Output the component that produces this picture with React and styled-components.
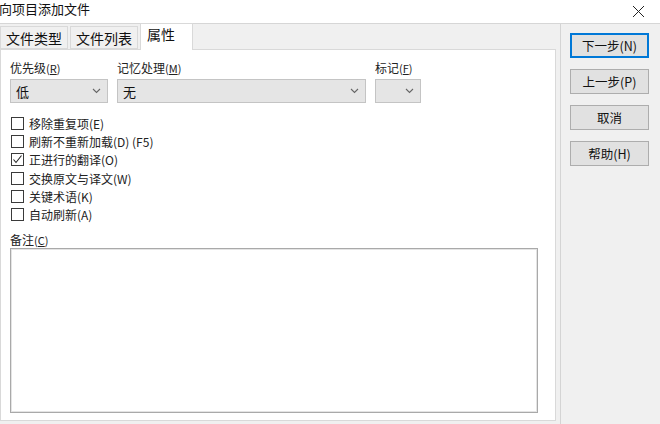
import React from "react";
import styled, { createGlobalStyle } from "styled-components";

const Global = createGlobalStyle`
  html, body { margin: 0; padding: 0; background: #f0f0f0; }
  body { font-family: "Noto Sans CJK SC", "Noto Sans", sans-serif; color: #1a1a1a; }
  * { box-sizing: border-box; }
`;

const Window = styled.div`
  width: 660px;
  height: 424px;
  background: #f0f0f0;
  display: flex;
  flex-direction: column;
  overflow: hidden;
`;

const TitleBar = styled.div`
  height: 24px;
  flex: none;
  background: #fff;
  display: flex;
  align-items: flex-start;
  justify-content: space-between;
  border-bottom: 1px solid #d6d6d6;
`;

const Title = styled.div`
  font-size: 13px;
  line-height: 18px;
  margin-left: -1px;
  color: #111;
`;

const CloseBtn = styled.div`
  width: 24px;
  height: 22px;
  margin-right: 10px;
  display: flex;
  align-items: center;
  justify-content: center;
`;

const Main = styled.div`
  flex: 1;
  display: flex;
`;

const LeftCol = styled.div`
  width: 556px;
  display: flex;
  flex-direction: column;
  padding-bottom: 3px;
`;

const TabStrip = styled.div`
  height: 25px;
  display: flex;
  align-items: flex-end;
  gap: 2px;
  position: relative;
  z-index: 1;
`;

const Tab = styled.div`
  height: ${p => (p.$active ? 27 : 23)}px;
  padding: ${p => (p.$active ? "0 17px 0 6px" : "0 5px")};
  margin-bottom: ${p => (p.$active ? -1 : 0)}px;
  background: ${p => (p.$active ? "#fff" : "#f0f0f0")};
  border: 1px solid #d9d9d9;
  border-bottom: ${p => (p.$active ? "none" : "1px solid #d9d9d9")};
  font-size: 14px;
  line-height: ${p => (p.$active ? 20 : 22)}px;
  display: flex;
  align-items: flex-start;
  color: #111;
`;

const Page = styled.div`
  flex: 1;
  background: #fff;
  border: 1px solid #d9d9d9;
  padding: 10px 0 0 9px;
  display: flex;
  flex-direction: column;
`;

const FieldRow = styled.div`
  display: flex;
  gap: 9px;
`;

const Field = styled.div`
  display: flex;
  flex-direction: column;
  gap: 3px;
  width: ${p => p.$w}px;
`;

const Label = styled.div`
  font-size: 12px;
  line-height: 16px;
  color: #222;
  white-space: nowrap;
`;

const Key = styled.span`
  font-size: 11px;
`;

const U = styled.span`
  text-decoration: underline;
  text-underline-offset: 1px;
`;

const Select = styled.div`
  height: 24px;
  background: #e5e5e5;
  border: 1px solid #c4c4c4;
  display: flex;
  align-items: center;
  justify-content: space-between;
  padding: 0 6px 0 5px;
  font-size: 13px;
  color: #111;
`;

const CheckList = styled.div`
  margin-top: 11px;
  display: flex;
  flex-direction: column;
`;

const CheckRow = styled.label`
  height: 18.3px;
  display: flex;
  align-items: center;
  gap: 5px;
  font-size: 12px;
  color: #222;
  white-space: nowrap;
`;

const Box = styled.span`
  width: 13px;
  height: 13px;
  border: 1px solid #3a3a3a;
  background: #fff;
  display: flex;
  align-items: center;
  justify-content: center;
  flex: none;
  margin-left: 1px;
`;

const NoteLabel = styled(Label)`
  margin-top: 8px;
`;

const NoteArea = styled.div`
  width: 528px;
  height: 165px;
  border: 1px solid #a9a9a9;
  box-shadow: inset 0 0 0 1px #e4e4e4;
  background: #fff;
`;

const RightCol = styled.div`
  margin-left: 4px;
  flex: 1;
  border-left: 1px solid #d4d4d4;
  padding: 9px 0 0 9px;
  display: flex;
  flex-direction: column;
  gap: 11px;
`;

const Button = styled.div`
  width: 79px;
  height: 25px;
  background: #e1e1e1;
  border: 1px solid ${p => (p.$default ? "#0078d7" : "#adadad")};
  box-shadow: ${p => (p.$default ? "inset 0 0 0 1px #0078d7" : "none")};
  display: flex;
  align-items: center;
  justify-content: center;
  font-size: 12.5px;
  color: #111;
`;

const Chevron = () => (
  <svg width="9" height="6" viewBox="0 0 9 6">
    <polyline points="1,1 4.5,4.5 8,1" fill="none" stroke="#666" strokeWidth="1.1" />
  </svg>
);

const Check = () => (
  <svg width="11" height="11" viewBox="0 0 11 11">
    <polyline points="1.5,5.5 4,8.5 9.5,1.5" fill="none" stroke="#222" strokeWidth="1.1" />
  </svg>
);

const Mn = ({ k }) => (
  <Key>(<U>{k}</U>)</Key>
);

const items = [
  ["移除重复项(E)", false],
  ["刷新不重新加载(D) (F5)", false],
  ["正进行的翻译(O)", true],
  ["交换原文与译文(W)", false],
  ["关键术语(K)", false],
  ["自动刷新(A)", false],
];

export default function App() {
  return (
    <Window>
      <Global />
      <TitleBar>
        <Title>向项目添加文件</Title>
        <CloseBtn>
          <svg width="13" height="13" viewBox="0 0 13 13">
            <path d="M1 1 L12 12 M12 1 L1 12" stroke="#222" strokeWidth="1" />
          </svg>
        </CloseBtn>
      </TitleBar>
      <Main>
        <LeftCol>
          <TabStrip>
            <Tab>文件类型</Tab>
            <Tab>文件列表</Tab>
            <Tab $active>属性</Tab>
          </TabStrip>
          <Page>
            <FieldRow>
              <Field $w={98}>
                <Label>优先级<Mn k="R" /></Label>
                <Select>低<Chevron /></Select>
              </Field>
              <Field $w={249}>
                <Label>记忆处理<Mn k="M" /></Label>
                <Select>无<Chevron /></Select>
              </Field>
              <Field $w={46}>
                <Label>标记<Mn k="F" /></Label>
                <Select><span /><Chevron /></Select>
              </Field>
            </FieldRow>
            <CheckList>
              {items.map(([t, c]) => (
                <CheckRow key={t}>
                  <Box>{c && <Check />}</Box>
                  {t}
                </CheckRow>
              ))}
            </CheckList>
            <NoteLabel>备注<Mn k="C" /></NoteLabel>
            <NoteArea />
          </Page>
        </LeftCol>
        <RightCol>
          <Button $default>下一步(N)</Button>
          <Button>上一步(P)</Button>
          <Button>取消</Button>
          <Button>帮助(H)</Button>
        </RightCol>
      </Main>
    </Window>
  );
}
